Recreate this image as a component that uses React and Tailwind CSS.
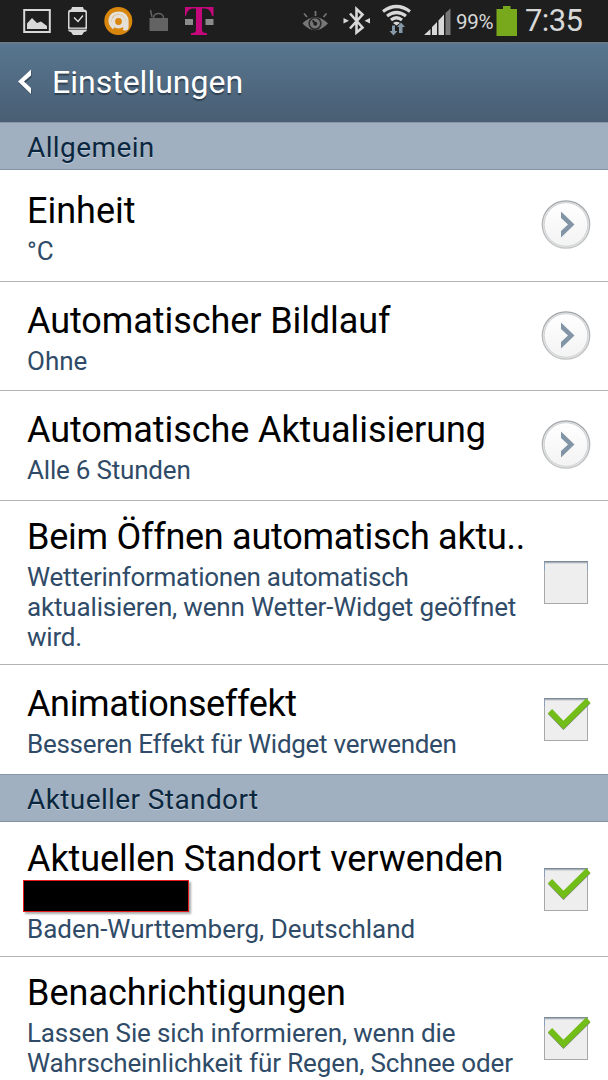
import React, { useState } from 'react';

const initialChecks = {
  open: false,
  animation: true,
  location: true,
  notifications: true,
};

// Icons on the left and right of the status bar
function StatusBar() {
  return (
    <div className="h-[42px] shrink-0 bg-[#1e1e1e] flex items-center justify-between">
      <svg width="216" height="42" viewBox="0 0 216 42">
        <rect x="24.2" y="10" width="25.6" height="22" fill="none" stroke="#d8d8d8" strokeWidth="2" />
        <path d="M27 29V23.500l5-5.500 5 5 4-1.500 6 4.500v3z" fill="#d8d8d8" />
        <path d="M72 7h11l1 3H71zM71 32h13l-2 3H73z" fill="#d8d8d8" />
        <rect x="68" y="9.500" width="19" height="22.500" rx="3" fill="#d8d8d8" />
        <rect x="69.500" y="12" width="16" height="15.500" rx="1" fill="#1e1e1e" />
        <path d="M68 29.300h19" stroke="#555" strokeWidth="1" />
        <path d="M74 17.500l4 4 5-6" fill="none" stroke="#e5e5e5" strokeWidth="1.300" />
        <circle cx="118.300" cy="21" r="14" fill="#d9860d" />
        <path d="M114 28C107 22 110 13 118.500 13C125 13 127 18 127 21V27.500C127 29 125 29.500 123.500 28.500" fill="none" stroke="#e4e0d8" strokeWidth="3.200" />
        <circle cx="118.500" cy="21.500" r="5.200" fill="none" stroke="#e4e0d8" strokeWidth="3.600" />
        <path d="M122.500 21h4v8c-3 0-4-1-4-3z" fill="#e4e0d8" />
        <path d="M149.500 18h18.500v13h-18.500z" fill="#636363" />
        <path d="M153.500 18c0-6 10-6 10 0M152 17l-1.500-7" fill="none" stroke="#636363" strokeWidth="1.500" />
        <path d="M185 19h8v6h-8zM205.500 19h8v6h-8z" fill="#8b8b8b" />
        <path d="M185 7h28.500v9h-1.500c-1-5-3-7.500-8-7.500h-2V29c0 3 1 4 5 4v2h-16v-2c4 0 5-1 5-4V8.500h-2c-5 0-7 2.500-8 7.500H185z" fill="#c4087c" />
      </svg>
      <div className="flex items-center h-full">
        <svg width="154" height="42" viewBox="300 0 154 42">
          <path d="M302.500 23.500Q315 10.500 328 23.500Q315 37 302.500 23.500z" fill="#777" />
          <circle cx="315" cy="23.500" r="5.800" fill="none" stroke="#2a2a2a" strokeWidth="1.600" />
          <circle cx="315.300" cy="23.700" r="2" fill="#222" />
          <path d="M315.500 23.500l-3-3" stroke="#222" strokeWidth="1.800" />
          <path d="M315.500 11v5M304 13.500l3 3.500M326.500 13.500l-3 3.500" stroke="#777" strokeWidth="1.700" />
          <path d="M350 13.500l12.500 14-6 5V9l6 5.500L350 28.500" fill="none" stroke="#d8d8d8" strokeWidth="2.600" />
          <path d="M343.500 18l5.500 2.800-5.500 2.800zM370 18l-5.500 2.800 5.500 2.800z" fill="#d8d8d8" />
          <path d="M383 11.500q13.500-10 27 0M387 16q9.500-7 19 0M391 20q5.500-4.500 11 0" fill="none" stroke="#d8d8d8" strokeWidth="3.200" />
          <path d="M393 23q3.500-2.500 7 0l-3.500 2.500z" fill="#d8d8d8" />
          <path d="M392 25.500h3v5.500h2.500l-4 4.500-4-4.500h2.500zM399 33h3.500v-6h2.500l-4-4.500-4 4.500h2z" fill="#8498a8" />
          <path d="M424 35l6.500-6v6zM432 27l5-5v13h-5zM438.500 20.500l5.500-6V35h-5.500z" fill="#d8d8d8" />
          <path d="M445.500 13l5-4.500V35h-5z" fill="#777" />
        </svg>
        <span className="w-[42px] ml-[2px] mt-[3px] text-[20.500px] tracking-[-0.300px] text-[#d8d8d8]">99%</span>
        <svg className="-ml-[2px]" width="22" height="42" viewBox="496 0 22 42">
          <path d="M496.500 9h6.500V6h7.500v3h6.500v27h-20.500z" fill="#78a91c" />
        </svg>
        <span className="w-[90px] pl-[7px] text-[31px] tracking-[-0.600px] text-[#d8d8d8]">7:35</span>
      </div>
    </div>
  );
}

function SectionTitle({ children }) {
  return (
    <h2 className="h-[48px] shrink-0 pl-[27px] pt-px bg-[#a0b0c0] border-t border-[#8797a5] border-b border-b-[#8290a0] text-[28px] leading-[48px] tracking-[0.400px] text-[#0b2740] [text-shadow:0_1px_0_#c0ccd6]">
      {children}
    </h2>
  );
}

function ArrowButton() {
  return (
    <svg width="50" height="50" viewBox="0 0 50 50">
      <defs>
        <linearGradient id="ring" x1="0" y1="0" x2="0" y2="1">
          <stop offset="0" stopColor="#a2a5a8" />
          <stop offset="1" stopColor="#c6c6c6" />
        </linearGradient>
        <linearGradient id="face" x1="0" y1="0" x2="0" y2="1">
          <stop offset="0" stopColor="#fff" />
          <stop offset="1" stopColor="#f3f3f3" />
        </linearGradient>
      </defs>
      <circle cx="25" cy="24.500" r="23.700" fill="#e4e6e8" stroke="url(#ring)" strokeWidth="1.300" />
      <circle cx="25" cy="24.500" r="21.800" fill="url(#face)" stroke="#d0d3d5" strokeWidth="1" />
      <path d="M20 11.500v6.500l7 6.500-7 6.500v6.500l13.500-13z" fill="#8295a6" />
    </svg>
  );
}

function CheckBox({ checked, onClick }) {
  return (
    <button onClick={onClick} className="block">
      <svg width="50" height="46" viewBox="0 0 50 46">
        <rect x="3.500" y="2.500" width="43" height="42" fill="#eee" stroke="#a8a8a8" />
        <path d="M3 2.500h44" stroke="#7c8b9a" />
        <path d="M4 3.500h42" stroke="#a9b0b8" />
        <path d="M4 4.500h42" stroke="#d8dadc" />
        <path d="M3.500 3v8M46.500 3v8" stroke="#8ba0b8" />
        {checked && (
          <>
            <path d="M9 16.200l13.500 13.800L47.500 5.500" fill="none" stroke="#808080" strokeWidth="5.500" />
            <path d="M9 15.200l13.500 13.800L47.300 4.500" fill="none" stroke="#72bd17" strokeWidth="6" />
          </>
        )}
      </svg>
    </button>
  );
}

// One settings row, the control sits on the right
function Row({ title, titleClass, className, control, children }) {
  return (
    <div className={`relative shrink-0 pl-[27px] border-b border-[#b2b2b2] bg-white whitespace-nowrap ${className}`}>
      <h3 className={`text-[36px] leading-[42px] text-black ${titleClass}`}>{title}</h3>
      <div className="mt-1 text-[26px] leading-[30px] text-[#2f4b67]">{children}</div>
      <div className="absolute right-[17px] top-0 bottom-px flex items-center">{control}</div>
    </div>
  );
}

export default function App() {
  const [checks, setChecks] = useState(initialChecks);

  const box = (name) => (
    <CheckBox checked={checks[name]} onClick={() => setChecks({ ...checks, [name]: !checks[name] })} />
  );

  return (
    <div className="w-[608px] h-[1080px] overflow-hidden flex flex-col bg-white font-['Roboto',sans-serif]">
      <StatusBar />
      <header className="h-[80px] shrink-0 flex items-center border-t-2 border-[#68798a] bg-linear-to-b from-[#587690] to-[#485e73] pb-[2px]">
        <svg className="ml-[17px] mr-[19px]" width="16" height="26" viewBox="0 0 16 26">
          <path d="M14.500 2v6L8 14l6.500 6v6L1.500 14z" fill="#344658" />
          <path d="M14 .500v6L7 12.500l7 6.500v6L1 12.500z" fill="#fff" />
        </svg>
        <h1 className="text-[32px] text-white [text-shadow:0_2px_1px_#2f4052]">Einstellungen</h1>
      </header>

      <SectionTitle>Allgemein</SectionTitle>
      <Row title="Einheit" className="h-[112px] pt-[20px]" control={<ArrowButton />}>
        <p>°C</p>
      </Row>
      <Row title="Automatischer Bildlauf" titleClass="tracking-[-0.080px]" className="h-[109px] pt-[18px]" control={<ArrowButton />}>
        <p>Ohne</p>
      </Row>
      <Row title="Automatische Aktualisierung" titleClass="tracking-[-0.080px]" className="h-[110px] pt-[18px]" control={<ArrowButton />}>
        <p className="tracking-[-0.200px]">Alle 6 Stunden</p>
      </Row>
      <Row title="Beim Öffnen automatisch aktu.." titleClass="tracking-[-0.270px]" className="h-[164px] pt-[15px]" control={box('open')}>
        <p className="tracking-[-0.260px]">Wetterinformationen automatisch</p>
        <p className="tracking-[-0.160px]">aktualisieren, wenn Wetter-Widget geöffnet</p>
        <p className="tracking-[-0.200px]">wird.</p>
      </Row>
      <Row title="Animationseffekt" titleClass="tracking-[-0.370px]" className="h-[109px] pt-[18px] border-b-0" control={box('animation')}>
        <p className="tracking-[-0.280px]">Besseren Effekt für Widget verwenden</p>
      </Row>

      <SectionTitle>Aktueller Standort</SectionTitle>
      <Row title="Aktuellen Standort verwenden" titleClass="tracking-[-0.100px]" className="h-[135px] pt-[16px]" control={box('location')}>
        {/* blacked out town name */}
        <div className="h-[32px] w-[166px] -ml-[4px] -mt-[4px] mb-[2px] bg-black border border-[#e51c1c] shadow-[2px_2px_2px_#aaa]" />
        <p>Baden-Wurttemberg, Deutschland</p>
      </Row>
      <Row title="Benachrichtigungen" className="h-[163px] pt-[15px]" control={box('notifications')}>
        <p className="tracking-[-0.140px]">Lassen Sie sich informieren, wenn die</p>
        <p className="tracking-[-0.120px]">Wahrscheinlichkeit für Regen, Schnee oder</p>
      </Row>
    </div>
  );
}
